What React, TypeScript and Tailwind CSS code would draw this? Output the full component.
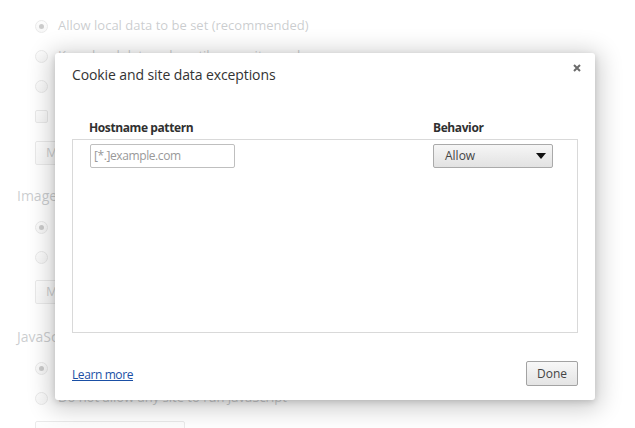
import React from 'react';

const Radio = ({ checked = false }: { checked?: boolean }) => (
  <span className="w-[13px] h-[13px] rounded-full border border-[#a8a8a8] bg-gradient-to-b from-[#f4f4f4] to-[#dedede] flex items-center justify-center shrink-0">
    {checked && <span className="w-[5px] h-[5px] rounded-full bg-[#333]" />}
  </span>
);

const RadioRow = ({ label, checked }: { label: string; checked?: boolean }) => (
  <div className="flex items-center gap-[10px] h-[30px]">
    <Radio checked={checked} />
    <span>{label}</span>
  </div>
);

const BgButton = ({ label }: { label: string }) => (
  <div className="h-[24px] px-[10px] border border-[#aaa] rounded-[2px] bg-gradient-to-b from-[#fafafa] to-[#e6e6e6] flex items-center w-fit">{label}</div>
);

const Background = () => (
  <div className="px-[35px] pt-[11px] text-[13px] text-[#303942]">
    <RadioRow label="Allow local data to be set (recommended)" checked />
    <RadioRow label="Keep local data only until you quit your browser" />
    <RadioRow label="Block sites from setting any data" />
    <div className="flex items-center gap-[10px] h-[30px]">
      <span className="w-[13px] h-[13px] border border-[#a8a8a8] rounded-[2px] bg-gradient-to-b from-[#f4f4f4] to-[#dedede]" />
      <span>Block third-party cookies and site data</span>
    </div>
    <div className="mt-[10px]"><BgButton label="Manage exceptions..." /></div>
    <div className="-ml-[18px] mt-[20px] text-[14px]">Images</div>
    <div className="mt-[6px]">
      <RadioRow label="Show all images (recommended)" checked />
      <RadioRow label="Do not show any images" />
    </div>
    <div className="mt-[8px]"><BgButton label="Manage exceptions..." /></div>
    <div className="-ml-[18px] mt-[22px] text-[14px]">JavaScript</div>
    <div className="mt-[6px]">
      <RadioRow label="Allow all sites to run JavaScript (recommended)" checked />
      <RadioRow label="Do not allow any site to run JavaScript" />
    </div>
    <div className="mt-[8px]"><BgButton label="Manage exceptions..." /></div>
  </div>
);

export default function App() {
  return (
    <div className="relative w-[635px] h-[428px] overflow-hidden bg-white font-['Open_Sans',sans-serif]">
      <Background />
      <div className="absolute inset-0 bg-white/75" />
      <div className="absolute left-[55px] top-[53px] w-[540px] h-[347px] bg-white rounded-[3px] shadow-[0_4px_23px_5px_rgba(0,0,0,0.2),0_2px_6px_rgba(0,0,0,0.15)] flex flex-col px-[17px] pt-[12px] pb-[14px] text-[#333]">
        <div className="flex items-start justify-between">
          <h1 className="text-[14px] leading-[20px] text-[#333] tracking-[-0.1px]">Cookie and site data exceptions</h1>
          <svg width="8" height="8" viewBox="0 0 8 8" className="-mt-[1px] -mr-[3px]">
            <path d="M1 1L7 7M7 1L1 7" stroke="#6b6b6b" strokeWidth="2" />
          </svg>
        </div>
        <div className="mt-[35px] flex text-[12px] font-bold leading-[16px] text-[#303030] tracking-[-0.4px]">
          <span className="ml-[17px] w-[344px]">Hostname pattern</span>
          <span>Behavior</span>
        </div>
        <div className="mt-[3px] h-[194px] border border-[#d9d9d9] pt-[4px]">
          <div className="flex items-center">
            <div className="ml-[17px] w-[145px] h-[24px] border border-[#bfbfbf] rounded-[2px] px-[3px] flex items-center text-[12px] text-[#999] tracking-[-0.4px]">[*.]example.com</div>
            <div className="ml-[198px] w-[120px] h-[24px] border border-[#aaa] rounded-[2px] bg-gradient-to-b from-[#f6f6f6] to-[#e2e2e2] flex items-center justify-between pl-[11px] pr-[6px] text-[12px] text-[#444]">
              <span>Allow</span>
              <svg width="10" height="6" viewBox="0 0 10 6"><path d="M0 0H10L5 6Z" fill="#111" /></svg>
            </div>
          </div>
        </div>
        <div className="mt-auto flex items-end justify-between">
          <a href="#" className="text-[12px] text-[#1a4fa5] underline leading-[16px] mb-[3px] tracking-[-0.4px]">Learn more</a>
          <button className="w-[52px] h-[25px] border border-[#a3a3a3] rounded-[2px] bg-gradient-to-b from-[#f8f8f8] to-[#e4e4e4] text-[12px] text-[#444]">Done</button>
        </div>
      </div>
    </div>
  );
}
